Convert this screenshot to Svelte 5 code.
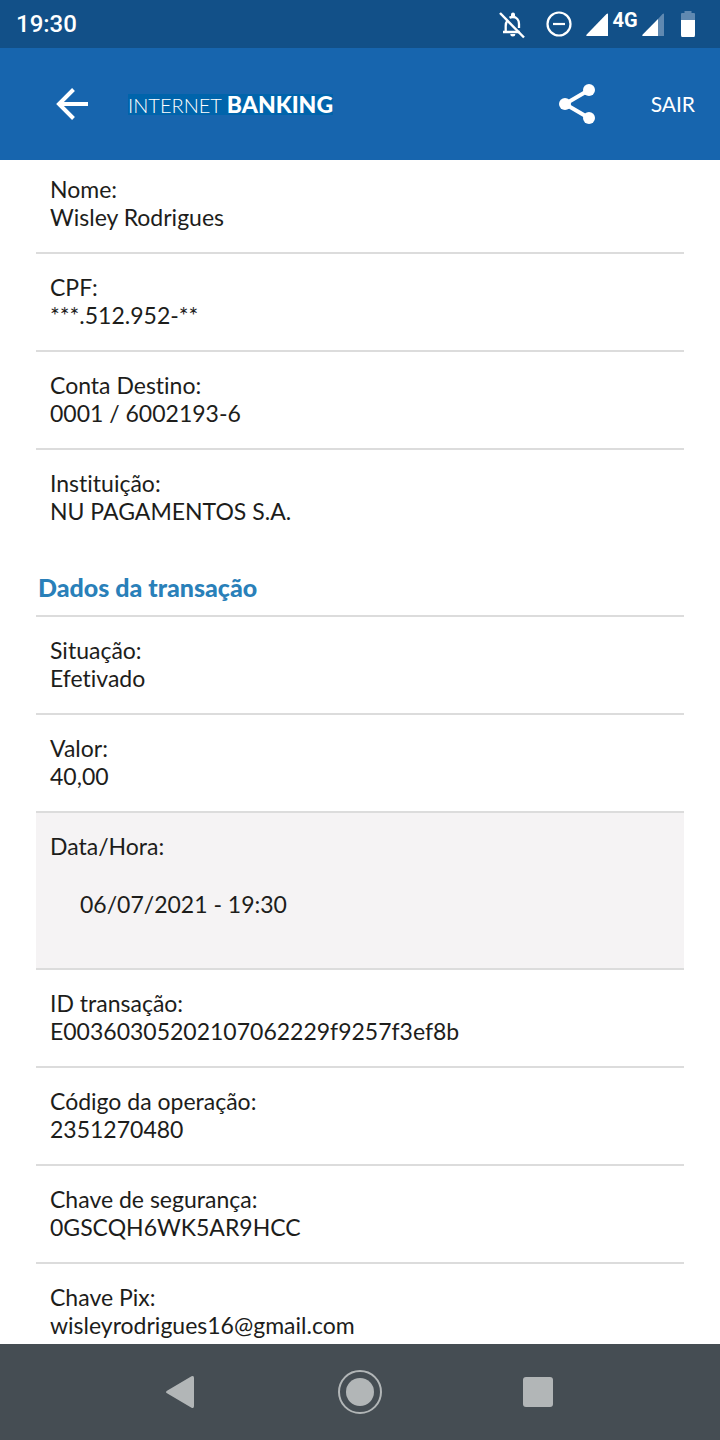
<script>
  const payee = [
    { label: 'Nome:', value: 'Wisley Rodrigues' },
    { label: 'CPF:', value: '***.512.952-**' },
    { label: 'Conta Destino:', value: '0001 / 6002193-6' },
    { label: 'Instituição:', value: 'NU PAGAMENTOS S.A.' }
  ];
  const transaction = [
    { label: 'Situação:', value: 'Efetivado' },
    { label: 'Valor:', value: '40,00' },
    { label: 'Data/Hora:', value: '06/07/2021 - 19:30', highlight: true },
    { label: 'ID transação:', value: 'E00360305202107062229f9257f3ef8b' },
    { label: 'Código da operação:', value: '2351270480' },
    { label: 'Chave de segurança:', value: '0GSCQH6WK5AR9HCC' },
    { label: 'Chave Pix:', value: 'wisleyrodrigues16@gmail.com' }
  ];
</script>

{#snippet rows(items)}
  <dl>
    {#each items as item}
      <div class="row" class:highlight={item.highlight}>
        <dt>{item.label}</dt>
        <dd>{item.value}</dd>
      </div>
    {/each}
  </dl>
{/snippet}

<div class="screen">
  <div class="status">
    <time>19:30</time>
    <div class="indicators">
      <svg width="32" height="32" viewBox="0 0 32 32" aria-hidden="true">
        <g fill="none" stroke="#fff" stroke-width="2.3">
          <path d="M11.5 12.5c-1.3 1.5-1.8 3.2-1.8 5.5v6h14M7 24h3" />
          <path d="M13.5 9.8c1-.6 2-.8 3.3-.8 3.7 0 6.2 3 6.2 7v4" />
          <path d="M4 5l24 24.5" stroke-width="2.5" />
        </g>
        <path d="M15 8V6.500a2 2 0 0 1 4 0V8zM14.300 26h5a2.500 2.500 0 0 1-5 0z" fill="#fff" />
      </svg>
      <svg class="dnd" width="26" height="26" viewBox="0 0 26 26" aria-hidden="true">
        <circle cx="13" cy="13" r="11.5" fill="none" stroke="#fff" stroke-width="2.2" />
        <path d="M7 13h12" stroke="#fff" stroke-width="2.2" />
      </svg>
      <svg width="22" height="26" viewBox="0 0 22 26" aria-hidden="true">
        <path d="M22 2.500V25H1.500q-2 0-.8-1.400L20.500 3z" fill="#fff" />
      </svg>
      <span class="network">4G</span>
      <svg width="22" height="26" viewBox="0 0 22 26" aria-hidden="true">
        <path d="M22 2.500V25h-6V8L20.500 3z" fill="#6089b1" />
        <path d="M16 8v17H1.500q-2 0-.8-1.400z" fill="#fff" />
      </svg>
      <svg class="battery" width="14" height="26" viewBox="0 0 14 26" aria-hidden="true">
        <path d="M3.500 0h7v2H13q1 0 1 1v6H0V3q0-1 1-1h2.500z" fill="#6089b1" />
        <path d="M0 9h14v15q0 2-1 2H1q-1 0-1-2z" fill="#fff" />
      </svg>
    </div>
  </div>

  <header>
    <button class="back" aria-label="Voltar">
      <svg width="32" height="32" viewBox="0 0 32 32" aria-hidden="true">
        <path d="M32 16H3M17.500 1.500L3 16l14.500 14.500" fill="none" stroke="#fff" stroke-width="4" />
      </svg>
    </button>
    <h1>INTERNET <b>BANKING</b></h1>
    <button class="share" aria-label="Compartilhar">
      <svg width="36" height="40" viewBox="0 0 36 40" aria-hidden="true">
        <path d="M30 6L6 20l24 14" fill="none" stroke="#fff" stroke-width="4" />
        <g fill="#fff">
          <circle cx="30" cy="6" r="6" />
          <circle cx="6" cy="20" r="6" />
          <circle cx="30" cy="34" r="6" />
        </g>
      </svg>
    </button>
    <button class="exit">SAIR</button>
  </header>

  <main>
    {@render rows(payee)}
    <h2>Dados da transação</h2>
    {@render rows(transaction)}
  </main>

  <nav>
    <button aria-label="Voltar">
      <svg width="44" height="44" viewBox="0 0 44 44" aria-hidden="true">
        <path d="M9 20.700L33.500 6.300Q36 5 36 8v28q0 3-2.500 1.700L9 23.300q-2-1.300 0-2.600z" fill="#b2b6b7" />
      </svg>
    </button>
    <button aria-label="Início">
      <svg width="44" height="44" viewBox="0 0 44 44" aria-hidden="true">
        <circle cx="22" cy="22" r="21" fill="none" stroke="#b2b6b7" stroke-width="2" />
        <circle cx="22" cy="22" r="14" fill="#b2b6b7" />
      </svg>
    </button>
    <button aria-label="Recentes">
      <svg width="44" height="44" viewBox="0 0 44 44" aria-hidden="true">
        <rect x="5" y="7" width="30" height="30" rx="3" fill="#b2b6b7" />
      </svg>
    </button>
  </nav>
</div>

<style>
  :global(body) {
    margin: 0;
    background: #fff;
  }
  .screen {
    display: flex;
    flex-direction: column;
    height: 100vh;
    color: #1d1d1b;
    font-family: Lato, sans-serif;
    font-size: 23px;
    font-variant-ligatures: none;
    line-height: 28px;
  }
  button {
    display: flex;
    align-items: center;
    justify-content: center;
    padding: 0;
    border: 0;
    background: none;
    color: inherit;
    font: inherit;
  }
  svg {
    display: block;
    flex: none;
  }
  .status {
    display: flex;
    align-items: center;
    justify-content: space-between;
    flex: none;
    height: 48px;
    padding: 0 25px 0 16px;
    background: #125088;
    color: #fff;
    font-family: Roboto, sans-serif;
    font-size: 24px;
    font-weight: 500;
  }
  .indicators {
    display: flex;
    align-items: center;
  }
  .dnd {
    margin: 0 14px 0 18px;
  }
  .network {
    width: 34px;
    padding-bottom: 8px;
    font-size: 20px;
    font-weight: 700;
    line-height: 24px;
    text-align: center;
  }
  .battery {
    margin-left: 17px;
  }
  header {
    display: flex;
    align-items: center;
    flex: none;
    height: 112px;
    padding: 0 25px 0 56px;
    background: #1765ae;
    color: #fff;
  }
  h1 {
    margin: 0 auto 0 40px;
    background: #0064ab;
    font-size: 20px;
    font-weight: 300;
    line-height: 20px;
    white-space: nowrap;
  }
  h1 b {
    font-size: 23px;
    font-weight: 900;
  }
  .exit {
    margin-left: 56px;
    font-size: 21px;
  }
  main {
    flex: 1;
    min-height: 0;
    padding: 0 36px;
    overflow-y: auto;
    scrollbar-width: none;
  }
  dl {
    margin: 0;
  }
  .row {
    padding: 19px 14px 21px;
    border-top: 2px solid #dcdcdc;
  }
  dl:first-child .row:first-child {
    padding-top: 15px;
    border-top: 0;
  }
  dd {
    margin: 0;
  }
  .highlight {
    background: #f5f3f4;
  }
  .highlight dd {
    padding: 30px 30px 29px;
  }
  h2 {
    margin: 0;
    padding: 27px 2px 14px;
    color: #2980b9;
    font-size: 25px;
    font-weight: 900;
    line-height: 28px;
  }
  nav {
    display: grid;
    grid-template-columns: repeat(3, 1fr);
    flex: none;
    height: 96px;
    padding: 0 12.5%;
    background: #454d53;
  }
</style>
